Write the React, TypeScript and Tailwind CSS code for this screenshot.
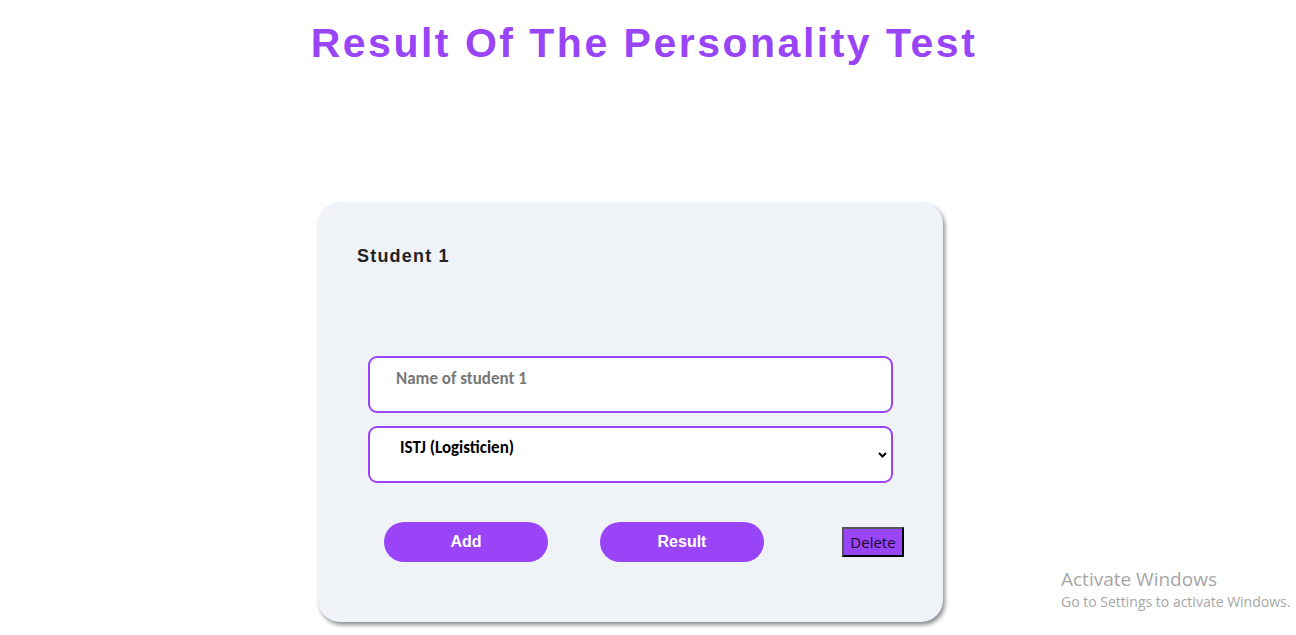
import { useState } from "react";

const types = [
  "ISTJ (Logisticien)",
  "ISFJ (Défenseur)",
  "INFJ (Avocat)",
  "INTJ (Architecte)",
];

const App = () => {
  const [name, setName] = useState("");
  const [type, setType] = useState(types[0]);

  return (
    <div className="relative h-[635px] w-full overflow-hidden bg-white font-['Liberation_Sans',Arial,sans-serif]">
      {/* TITLE */}
      <h1 className="pt-[20px] pr-[8px] text-center text-[41px] leading-[47px] font-bold tracking-[2.5px] text-[#9945f7]">
        Result Of The Personality Test
      </h1>

      {/* CARD */}
      <div className="mt-[135px] ml-[318px] h-[420px] w-[625px] rounded-[22px] bg-[#eff3f8] shadow-[2px_3px_4px_rgba(0,0,0,0.45)]">
        <h2 className="pt-[44px] pl-[39px] text-[18px] leading-[21px] font-bold tracking-[1.2px] text-[#222]">
          Student 1
        </h2>

        <div className="mt-[89px] flex flex-col gap-[13px] px-[50px]">
          <input
            value={name}
            onChange={(e) => setName(e.target.value)}
            placeholder="Name of student 1"
            className="h-[57px] w-full rounded-[9px] border-2 border-[#9945f7] bg-white pt-[9px] pb-[21px] pl-[26px] font-['Carlito',Lato,sans-serif] text-[17px] font-bold text-black outline-none placeholder:text-[#777]"
          />
          <div className="relative">
            <select
              value={type}
              onChange={(e) => setType(e.target.value)}
              className="h-[57px] w-full appearance-none rounded-[9px] border-2 border-[#9945f7] bg-white pt-[7px] pb-[23px] pl-[30px] font-['Carlito',Lato,sans-serif] text-[17px] font-bold text-black outline-none"
            >
              {types.map((t) => (
                <option key={t}>{t}</option>
              ))}
            </select>
            <svg
              className="pointer-events-none absolute top-[26px] right-[6px]"
              width="9"
              height="6"
              viewBox="0 0 9 6"
            >
              <path d="M1 1 L4.5 4.5 L8 1" fill="none" stroke="#000" strokeWidth="2" />
            </svg>
          </div>
        </div>

        {/* BUTTONS */}
        <div className="mt-[39px] flex items-center pl-[66px]">
          <button className="h-[40px] w-[164px] rounded-full bg-[#9945f7] text-[16px] font-bold text-white">
            Add
          </button>
          <button className="ml-[52px] h-[40px] w-[164px] rounded-full bg-[#9945f7] text-[16px] font-bold text-white">
            Result
          </button>
          <button className="ml-[78px] h-[30px] w-[62px] border-2 border-t-[#555] border-r-black border-b-black border-l-[#555] bg-[#9945f7] font-['Open_Sans',sans-serif] text-[15px] text-[#1a0a2a]">
            Delete
          </button>
        </div>
      </div>

      {/* WATERMARK */}
      <div className="pointer-events-none absolute top-[567px] left-[1061px] font-['Open_Sans',sans-serif] whitespace-nowrap text-[#a6a6a6]">
        <div className="text-[19px] leading-[25px]">Activate Windows</div>
        <div className="text-[14px] leading-[20px]">Go to Settings to activate Windows.</div>
      </div>
    </div>
  );
};

export default App;
